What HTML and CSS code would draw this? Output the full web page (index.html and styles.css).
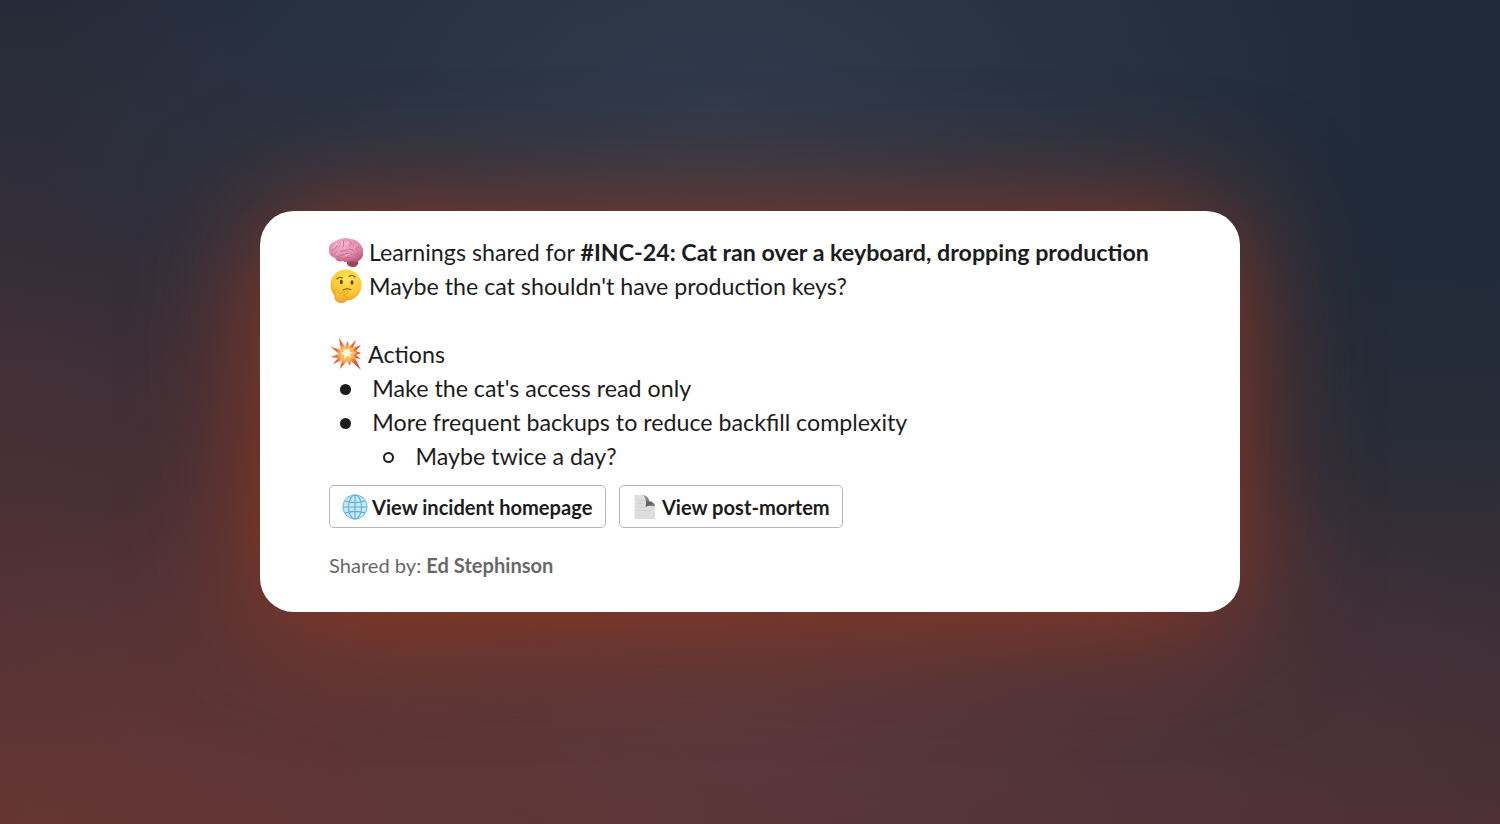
FILE: index.html
```html
<!DOCTYPE html>
<html lang="en">
<head>
    <meta charset="UTF-8">
    <meta name="viewport" content="width=device-width, initial-scale=1.0">
    <title>Incident learnings</title>
    <link rel="stylesheet" href="styles.css">
</head>
<body>
    <main class="card">
        <p class="line">
            <svg class="emoji" viewBox="0 0 34 34">
                <defs>
                    <radialGradient id="brain" cx=".4" cy=".25" r=".8">
                        <stop offset="0" stop-color="#f3b3cc"/>
                        <stop offset=".6" stop-color="#e08cae"/>
                        <stop offset="1" stop-color="#b9587d"/>
                    </radialGradient>
                </defs>
                <path d="M18 27c1-3 9-4 11-1 1 4-2 6-5 6s-7-2-6-5z" fill="#96485c"/>
                <path d="M0 16C-1 11 2 7 7 6c4-3 10-4 15-2 5 0 9 4 11 8 2 4 2 10-2 13-2 2-6 2-8 1-3 1-6 2-9 0-4 1-7 0-8-3-3-1-6-3-6-7z" fill="url(#brain)"/>
                <g fill="none" stroke="#c4648d" stroke-width=".8" stroke-linecap="round">
                    <path d="M3 16c2-3 4-2 5-5m2-4c2 1 2 3 0 5m5-7c-2 3 1 4-1 7m6-6c3 1 3 4 0 5m6-3c-3 1-2 4 0 5m4-1c-2 0-3 2-2 4"/>
                    <path d="M4 20c3-3 6-1 8-4 3 1 4-2 7-1 2-2 5 0 7 2m-18 5c3 0 4-3 7-2 3-3 5 0 8-1m-9 5c3-1 5-3 8-1m3-3c2 0 4-1 5-3"/>
                </g>
                <g fill="none" stroke="#fbcbdc" stroke-width=".7" stroke-linecap="round">
                    <path d="M5 13c0-2 1-3 3-4m4 2c0-2 0-3 1-4m4 3c0-2 1-3 3-3m5 6c0-2 1-3 2-4M7 19c1-1 3-1 4-2m5 4c2-2 4-1 5-2"/>
                </g>
            </svg>
            <span>Learnings shared for <b>#INC-24: Cat ran over a keyboard, dropping production</b></span>
        </p>
        <p class="line">
            <svg class="emoji" viewBox="0 0 34 34">
                <defs>
                    <radialGradient id="face" cx=".55" cy=".3" r=".75">
                        <stop offset="0" stop-color="#ffe657"/>
                        <stop offset=".65" stop-color="#fcc72f"/>
                        <stop offset="1" stop-color="#ec9c20"/>
                    </radialGradient>
                    <linearGradient id="hand" x1="0" y1="0" x2="0" y2="1">
                        <stop offset="0" stop-color="#ffd33e"/>
                        <stop offset="1" stop-color="#f1a126"/>
                    </linearGradient>
                </defs>
                <circle cx="17" cy="16" r="15.500" fill="url(#face)"/>
                <ellipse cx="12.3" cy="13" rx="1.5" ry="2.2" fill="#65401c"/>
                <ellipse cx="23" cy="13.500" rx="1.5" ry="2.2" fill="#65401c"/>
                <path d="M8 10c1.500-1.800 3.500-2 5.500-1.200M20 7.500c2.300-1.500 4.500-1.300 6 .5" fill="none" stroke="#95601c" stroke-width="1.3" stroke-linecap="round"/>
                <path d="M14 21c3-1.500 5.500-1.500 8-.3" fill="none" stroke="#9c5f1a" stroke-width="1.2" stroke-linecap="round"/>
                <path d="M6 21c1-1 3 0 3 2l1 2 7-3c2-.5 3 1.5 1 2.500l-4 2c2 0 4 1 4 2.500 0 3-2.500 4.500-6 4.500-4 0-6-2-6-5.500z" fill="url(#hand)" stroke="#e39624" stroke-width=".8"/>
            </svg>
            <span>Maybe the cat shouldn't have production keys?</span>
        </p>
        <p class="line actions">
            <svg class="emoji" viewBox="0 0 34 34">
                <defs>
                    <radialGradient id="boom" cx=".5" cy=".5" r=".52">
                        <stop offset="0" stop-color="#fff3a0"/>
                        <stop offset=".4" stop-color="#fdb054"/>
                        <stop offset=".65" stop-color="#ef6737"/>
                        <stop offset="1" stop-color="#cf4932"/>
                    </radialGradient>
                </defs>
                <path d="M10 1l6 9 3-6 1 6 7-7-3 8 8-3-5 6 5 2-5 2 5 4-6-1 6 12-10-9-1 5-3-5-7 8 2-9-9 4 5-6-7-1 8-3-8-7 10 3z" fill="url(#boom)"/>
                <path d="M13 9l4 4 2-5 2 4 5-2-2 4 4 1-4 3 3 4-5-1-2 4-3-4-5 4 2-6-5-1 5-2-4-5 4 1z" fill="#ffb85a"/>
                <path d="M14 12l4 1 2-2 1 4 4 1-4 1 1 4-3-2-4 3v-4l-3-2 3-1z" fill="#fffbdc"/>
            </svg>
            <span>Actions</span>
        </p>
        <ul class="list">
            <li>Make the cat's access read only</li>
            <li>More frequent backups to reduce backfill complexity
                <ul class="sublist">
                    <li>Maybe twice a day?</li>
                </ul>
            </li>
        </ul>
        <div class="buttons">
            <button class="btn">
                <svg class="icon" viewBox="0 0 26 26">
                    <circle cx="13" cy="13" r="12.500" fill="#6fb8da"/>
                    <circle cx="13" cy="13" r="11.500" fill="#c3e8f6"/>
                    <g fill="none" stroke="#62add0" stroke-width="1.1">
                        <ellipse cx="13" cy="13" rx="6.500" ry="12"/>
                        <path d="M13 1v24M1 13h24M3 7c6 2 14 2 20 0M3 19c6-2 14-2 20 0"/>
                    </g>
                </svg>
                <span>View incident homepage</span>
            </button>
            <button class="btn">
                <svg class="icon" viewBox="0 0 26 26">
                    <defs>
                        <linearGradient id="fold" x1="0" y1="0" x2="1" y2="1">
                            <stop offset="0" stop-color="#b4b4b4"/>
                            <stop offset=".6" stop-color="#5c5c5c"/>
                            <stop offset="1" stop-color="#8c8c8c"/>
                        </linearGradient>
                    </defs>
                    <path d="M2.500 1h10l10.500 9.500V25h-20.500z" fill="#dedede"/>
                    <path d="M11 1c3.500 0 6 3 6 6.500 3 0 6 1.500 6 5-3-1.200-7-.8-9.500.5 1-4 .5-8.500-2.500-12z" fill="url(#fold)"/>
                    <path d="M5 6h6M5 9.500h6M5 13h7M5 16.500h14M5 21h4" stroke="#cdcdcd" stroke-width=".8"/>
                </svg>
                <span>View post-mortem</span>
            </button>
        </div>
        <p class="shared">Shared by: <b>Ed Stephinson</b></p>
    </main>
</body>
</html>
```

FILE: styles.css
```css
*,
*::before {
    box-sizing: border-box;
}
body {
    margin: 0;
    height: 100vh;
    padding-bottom: 1px;
    overflow: hidden;
    display: flex;
    justify-content: center;
    align-items: center;
    font-family: Lato, sans-serif;
    color: #1d1c1d;
    background:
        radial-gradient(ellipse 680px 420px at 720px 100px, rgba(52, 63, 82, 0.75), rgba(52, 63, 82, 0)),
        radial-gradient(ellipse 1150px 600px at 0 100%, rgba(114, 56, 50, 0.65), rgba(114, 56, 50, 0)),
        radial-gradient(ellipse 900px 320px at 750px 740px, rgba(98, 62, 68, 0.55), rgba(98, 62, 68, 0)),
        radial-gradient(ellipse 420px 460px at 0 45%, rgba(68, 46, 55, 0.6), rgba(68, 46, 55, 0)),
        radial-gradient(ellipse 800px 460px at 100% 10%, #202a38 20%, rgba(32, 42, 56, 0)),
        linear-gradient(to bottom, #222b39 0%, #252d3b 30%, #2d2d38 55%, #3d2e36 78%, #4a2f34 100%);
}
.card {
    width: 980px;
    height: 401px;
    padding: 24px 69px 0;
    background: #fff;
    border-radius: 34px;
    box-shadow: 0 7px 125px #98391f;
}
p,
ul {
    margin: 0;
    padding: 0;
}
.line {
    display: flex;
    align-items: center;
    gap: 6px;
    height: 34px;
    font-size: 23.22px;
    line-height: 34px;
    white-space: nowrap;
}
.actions {
    margin-top: 34px;
    gap: 5px;
}
.emoji {
    width: 34px;
    height: 34px;
    flex: none;
}
.list {
    list-style: none;
    font-size: 23.22px;
    line-height: 34px;
}
.list li {
    padding-left: 43.3px;
}
.list li::before {
    content: '';
    float: left;
    width: 11px;
    height: 11px;
    margin: 13px 0 0 -32.5px;
    border-radius: 50%;
    background: #1d1c1d;
}
.sublist {
    list-style: none;
}
.list .sublist li::before {
    background: none;
    border: 2px solid #1d1c1d;
}
.buttons {
    display: flex;
    gap: 13px;
    margin-top: 12px;
}
.btn {
    display: flex;
    align-items: center;
    gap: 4px;
    height: 43px;
    padding: 0 12.5px 0 12px;
    border: 1px solid #b5b5b5;
    border-radius: 5px;
    background: #fff;
    color: #1d1c1d;
    font-family: inherit;
    font-size: 20.1px;
    font-weight: 700;
    white-space: nowrap;
}
.icon {
    width: 26px;
    height: 26px;
}
.shared {
    margin-top: 22px;
    font-size: 20.1px;
    line-height: 30px;
    color: #696869;
}
```
